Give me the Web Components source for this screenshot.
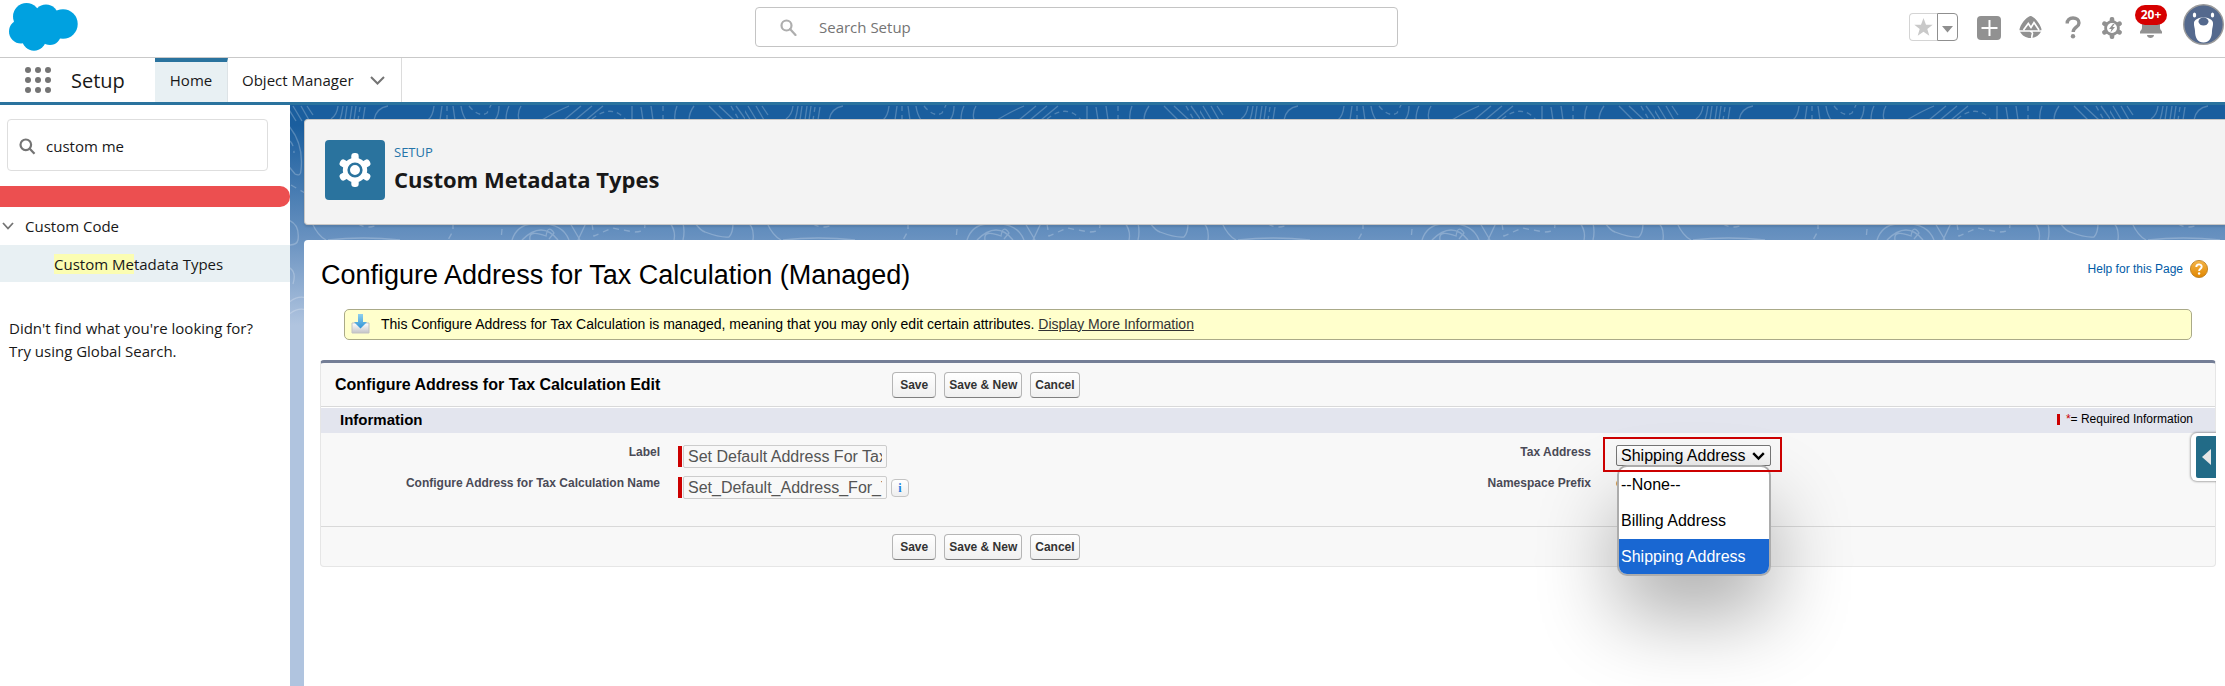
<!DOCTYPE html>
<html lang="en">
<head>
<meta charset="utf-8">
<title>Custom Metadata Types | Setup</title>
<style>
  html, body { margin: 0; }
  body { font-family: "Open Sans", "Noto Sans", sans-serif; font-size: 15px; color: #181818; background: #fff; }
</style>
</head>
<body>
<setup-app></setup-app>
<script>
const define = (name, html) => {
  const template = document.createElement('template');
  template.innerHTML = '<style>*{box-sizing:border-box}:host{display:block;box-sizing:border-box}</style>' + html;
  customElements.define(name, class extends HTMLElement {
    constructor() {
      super();
      this.attachShadow({ mode: 'open' }).append(template.content.cloneNode(true));
    }
  });
};

define('setup-app', `
<style>
  :host { display: flex; flex-direction: column; min-height: 100vh; overflow: hidden; }
  .body { flex: 1; display: grid; grid-template-columns: 290px minmax(0, 1fr); }
  main { position: relative; padding: 14px 0 0 14px; display: flex; flex-direction: column; gap: 15px; background: #b0c4df; }
  topo-background { position: absolute; inset: 0 0 auto 0; }
  page-header, content-card { position: relative; }
  content-card { flex: 1; }
</style>
<app-header></app-header>
<app-nav></app-nav>
<div class="body">
  <setup-sidebar></setup-sidebar>
  <main>
    <topo-background></topo-background>
    <page-header>Custom Metadata Types</page-header>
    <content-card>
      <managed-notice></managed-notice>
      <edit-block>
        <span slot="title">Configure Address for Tax Calculation Edit</span>
        <form-field slot="left" label="Label" value="Set Default Address For Tax Calculation"></form-field>
        <form-field slot="left" label="Configure Address for Tax Calculation Name" value="Set_Default_Address_For_Tax_Calculation" info></form-field>
        <picklist-field slot="right"></picklist-field>
        <text-field slot="right"></text-field>
      </edit-block>
    </content-card>
  </main>
</div>`);

define('app-header', `
<style>
  :host { display: grid; grid-template-columns: 755fr 643fr 827fr; align-items: start; height: 58px; border-bottom: 1px solid #c9c9c9; background: #fff; }
  .logo { display: block; margin: 3px 0 0 9px; }
  .search { display: flex; align-items: center; gap: 22px; height: 40px; margin-top: 7px; padding: 0 24px; border: 1px solid #c4c4c4; border-radius: 4px; }
  .search input { flex: 1; border: 0; outline: 0; padding: 0; background: none; font: 15px "Open Sans", sans-serif; color: #444; }
  .search input::placeholder { color: #747474; opacity: 1; }
  .actions { display: flex; justify-content: flex-end; align-items: flex-start; padding: 4px 1px 0 0; }
  button { display: block; border: 0; padding: 0; background: none; line-height: 0; }
  .fav { display: flex; margin: 9px 19px 0 0; }
  .fav button { height: 28px; width: 28px; border: 1px solid #d4d4d4; border-right: 0; border-radius: 4px 0 0 4px; }
  .fav button + button { width: 21px; border: 1px solid #8f8f8f; border-radius: 0 4px 4px 0; }
  .plus { margin: 12px 18px 0 0; } .trail { margin: 12px 23px 0 0; } .help { margin: 12px 20px 0 0; } .gear { margin: 12px 12px 0 0; }
  .bell { position: relative; width: 32px; height: 38px; margin-right: 16px; }
  .badge { position: absolute; left: 0; top: 1px; width: 32px; height: 20px; border-radius: 10px; background: #d60000; color: #fff; font: bold 12px/20px "Open Sans", sans-serif; text-align: center; }
</style>
<svg class="logo" width="70" height="48" viewBox="0 0 70 48" role="img" aria-label="Salesforce"><g fill="#00a1e0"><circle cx="17.500" cy="13.500" r="13.500"/><circle cx="37" cy="14" r="12.500"/><circle cx="54" cy="21" r="14.700"/><circle cx="12" cy="28.500" r="12"/><circle cx="25" cy="36" r="11.800"/><circle cx="41" cy="31" r="11"/><path d="M14 12h40v20H14z"/></g></svg>
<label class="search"><svg width="17" height="17" viewBox="0 0 17 17" fill="none" stroke="#aeaeae" stroke-width="2.200"><circle cx="6.500" cy="6.500" r="5"/><path d="M10 10l5.500 6" stroke-linecap="round"/></svg><input type="text" placeholder="Search Setup" aria-label="Search Setup"></label>
<div class="actions">
  <div class="fav"><button aria-label="Favorite"><svg width="27" height="26" viewBox="0 0 27 26"><path d="M13.500 4l2.500 6.800h6.700l-5.400 4.200 2 6.700-5.800-4-5.800 4 2-6.700L4.300 10.800H11z" fill="#c9c9c9"/></svg></button><button aria-label="Favorites list"><svg width="19" height="26" viewBox="0 0 19 26"><path d="M4 12h11l-5.500 6.500z" fill="#8f8f8f"/></svg></button></div>
  <button class="plus" aria-label="Add"><svg width="24" height="24" viewBox="0 0 24 24"><rect width="24" height="24" rx="4" fill="#919191"/><path d="M12.500 4v16M4.500 12h16" stroke="#fff" stroke-width="2"/></svg></button>
  <button class="trail" aria-label="Guidance center"><svg width="23" height="22" viewBox="0 0 23 22"><path d="M11.500 0c2 0 8.500 5 10.800 12.500.4 1.600.1 2.500-.3 3.200C20 19.500 16 22 11.500 22S3 19.500 1 15.700c-.4-.7-.7-1.600-.3-3.200C3 5 9.500 0 11.500 0z" fill="#919191"/><path d="M0 15h23M4.500 14l4.800-6.500 2.700 4 3-5 5 7.500M11 15c5 2 1 3 2 7" fill="none" stroke="#fff" stroke-width="1.700"/></svg></button>
  <button class="help" aria-label="Help"><svg width="16" height="23" viewBox="0 0 16 23"><path d="M2.200 7.500C2 4 4.500 2 8 2s6 2 6 5c0 4.500-5.800 4-5.800 9" fill="none" stroke="#919191" stroke-width="3.400"/><circle cx="8" cy="20.300" r="2.200" fill="#919191"/></svg></button>
  <button class="gear" aria-label="Setup"><svg width="22" height="24" viewBox="-11 -12 22 24"><g fill="#919191"><circle r="7.800"/><rect x="-2.300" y="-11" width="4.600" height="22" rx="2"/><rect x="-2.300" y="-11" width="4.600" height="22" rx="2" transform="rotate(60)"/><rect x="-2.300" y="-11" width="4.600" height="22" rx="2" transform="rotate(120)"/></g><circle r="5" fill="#fff"/><path d="M1-4l-4 5h2.500L-1.500 4.500 3-1H.5L2.500-4z" fill="#919191"/></svg></button>
  <button class="bell" aria-label="Notifications"><svg width="32" height="38" viewBox="0 0 32 38"><path d="M7 12h18v12c0 2 2 2.500 2 4v1.500H5V28c0-1.500 2-2 2-4zM12 31h7c0 4-7 4-7 0z" fill="#919191"/></svg><span class="badge">20+</span></button>
  <button aria-label="View profile"><svg width="41" height="41" viewBox="0 0 41 41"><circle cx="20.500" cy="20.500" r="19.800" fill="#54698d" stroke="#9b9b9b" stroke-width="1.400"/><path d="M11 19c0-3.500 5-5.500 9.500-5.500S30 15.500 30 19c.3 3-1 5-1 8 0 7-3 11.500-8.500 11.500S12 34 12 27c0-3-1.300-5-1-8z" fill="#fff"/><ellipse cx="20.500" cy="17.500" rx="5" ry="4" fill="#54698d"/><ellipse cx="11.500" cy="11" rx="1.700" ry="2.600" fill="#fff"/><ellipse cx="29.500" cy="11" rx="1.700" ry="2.600" fill="#fff"/></svg></button>
</div>`);

define('app-nav', `
<style>
  :host { display: flex; height: 47px; border-bottom: 3px solid #2a739e; background: #fff; }
  button { border: 0; padding: 0; background: none; line-height: 0; }
  .waffle { margin: 0 20px 0 25px; }
  .app { width: 84px; font-size: 20px; line-height: 46px; }
  nav { display: flex; }
  a { color: #181818; text-decoration: none; line-height: 44px; }
  .home { width: 73px; text-align: center; line-height: 36px; border-top: 4px solid #2a739e; background: #e8f0f3; border-right: 1px solid #dde3e6; }
  .om { display: flex; align-items: center; gap: 16px; padding: 0 16px 0 14px; border-right: 1px solid #dcdcdc; }
</style>
<button class="waffle" aria-label="App launcher"><svg width="26" height="26" viewBox="0 0 26 26" fill="#747474"><circle cx="3" cy="3" r="3"/><circle cx="13" cy="3" r="3"/><circle cx="23" cy="3" r="3"/><circle cx="3" cy="13" r="3"/><circle cx="13" cy="13" r="3"/><circle cx="23" cy="13" r="3"/><circle cx="3" cy="23" r="3"/><circle cx="13" cy="23" r="3"/><circle cx="23" cy="23" r="3"/></svg></button>
<span class="app">Setup</span>
<nav><a class="home" href="#home">Home</a><div class="om"><a href="#objects">Object Manager</a><button aria-label="Object Manager menu"><svg width="15" height="9" viewBox="0 0 15 9" fill="none" stroke="#747474" stroke-width="2"><path d="M1 1l6.500 6.500L14 1"/></svg></button></div></nav>`);

define('setup-sidebar', `
<style>
  :host { background: #fff; padding-top: 14px; }
  .find { display: flex; align-items: center; gap: 10px; height: 52px; margin: 0 22px 0 7px; padding: 2px 0 0 11px; border: 1px solid #dedede; border-radius: 4px; }
  input { flex: 1; min-width: 0; border: 0; outline: 0; padding: 0; font: 15px "Open Sans", sans-serif; color: #181818; }
  .bar { height: 21px; margin-top: 15px; border-radius: 0 10px 10px 0; background: #ec4f50; }
  .group { display: flex; align-items: center; gap: 11px; height: 38px; padding-left: 2px; }
  a { display: block; height: 37px; padding-left: 54px; line-height: 38px; background: #e8f0f3; color: #181818; text-decoration: none; }
  mark { background: #fbfdb2; color: inherit; }
  p { margin: 35px 9px 0; line-height: 23px; }
</style>
<label class="find"><svg width="17" height="17" viewBox="0 0 17 17" fill="none" stroke="#747474" stroke-width="2.200"><circle cx="6.800" cy="6.800" r="5.300"/><path d="M10.500 10.500l5 5.300"/></svg><input type="text" value="custom me" aria-label="Quick Find"></label>
<div class="bar"></div>
<div class="group"><svg width="12" height="8" viewBox="0 0 12 8" fill="none" stroke="#747474" stroke-width="1.800"><path d="M1 1l5 5.500L11 1"/></svg><span>Custom Code</span></div>
<a href="#cmt"><mark>Custom Me</mark>tadata Types</a>
<p>Didn't find what you're looking for?<br>Try using Global Search.</p>`);

define('topo-background', `
<style>
  :host { height: 220px; background: linear-gradient(#1a5e9e 20px, #6690bf 130px, #b0c4df 220px); }
  svg { display: block; width: 100%; height: 100%; }
</style>
<svg aria-hidden="true"><defs><pattern id="topo" width="455" height="220" patternUnits="userSpaceOnUse"><g fill="none" stroke="#fff" stroke-opacity=".23" stroke-width="1.300">
<path d="M-2 3L6 16M3 1l9 15M11 1l8 14M17 1l6 9M48 1q-1 9-7 13M53 1q-1 8-3 14M57 1l-2 14M62 1l-2 14M66 1l-2 14M75 2l-2 13M98 1Q86 3 84 15M144 1q-1 10-6 14M152 1l-2 14M163 1l2 14M171 1q1 8 5 14M209 1q0 9-4 14M219 1q-3 6-3 14M231 1q-4 6-2 14M279 1q-12 5-27 14M291 1l-17 14M302 1l-17 14M313 1l-17 14M342 1v14M351 2l2 13M361 1l2 14M387 1q-3 7-2 14M404 1q-5 7-5 14M419 1l14 14M429 1l15 14M446 1l10 14"/>
<path stroke-dasharray="5 4" d="M70 2l-2 13M157 1v14M179 1q10 12 18 7l4-8M302 14q20-16 34 1M373 1v14M441 1l8 14"/>
<path d="M-2 20q16 18 13 45 0 7-6 4L-4 58M-2 115q12 4 10 20-1 5-9 5M22 118q6 13 14 17M38 135q35-4 72 0M222 135q5-15 20-16 30-3 37 16M232 135q20-20 36 0M240 135q-2-11 16-4 2-12 8-3l-5 6M280 118l10 17M296 118l-8 17M380 118q6 8 4 17M393 118q2 9 0 17M405 118q6 8 10 9 16 6 24 5 4-4 4-14M460 118q1 9-2 17M-2 162q9 4 5 17M-2 198q10-8 18-5M-2 210q10-8 18-5"/>
<path stroke-dasharray="6 5" d="M0 36q4 4 4 12M1 80l14 8M68 119q10 6 22 0M163 118v8l-5 9M212 124l-1 11M302 119l2 12 18-8 22 4q14 0 10-10"/>
</g></pattern></defs><rect width="100%" height="100%" fill="url(#topo)"/></svg>`);

define('page-header', `
<style>
  :host { display: flex; align-items: flex-start; gap: 9px; height: 106px; padding: 20px; border: 1px solid #c9c7c5; border-right: 0; border-radius: 4px 0 0 4px; background: #f3f3f3; box-shadow: 0 2px 2px rgba(0,0,0,.1); }
  .eyebrow { margin-top: 2px; font-size: 13px; line-height: 20px; color: #2574a9; }
  h1 { margin: 0; font-size: 22px; line-height: 34px; font-weight: 700; }
</style>
<svg width="60" height="60" viewBox="-30 -30 60 60" aria-hidden="true"><rect x="-30" y="-30" width="60" height="60" rx="4" fill="#2a739e"/><g fill="#fff"><circle r="12.200"/><rect x="-3.700" y="-17" width="7.400" height="34" rx="3.200"/><rect x="-3.700" y="-17" width="7.400" height="34" rx="3.200" transform="rotate(60)"/><rect x="-3.700" y="-17" width="7.400" height="34" rx="3.200" transform="rotate(120)"/></g><circle r="6.300" fill="#fff" stroke="#2a739e" stroke-width="2.600"/></svg>
<div><div class="eyebrow">SETUP</div><h1><slot></slot></h1></div>`);

define('content-card', `
<style>
  :host { padding: 18px 9px 0 16px; border-radius: 4px 0 0 0; background: #fff; font-family: "Liberation Sans", Arial, sans-serif; color: #000; }
  header { display: flex; justify-content: space-between; align-items: flex-start; height: 51px; padding-left: 1px; }
  h2 { margin: 0; font-size: 27px; line-height: 34px; font-weight: 400; }
  .help { display: flex; align-items: center; gap: 7px; margin: 0 8px 0 0; font-size: 12px; line-height: 22px; color: #015ba7; text-decoration: none; }
</style>
<header><h2>Configure Address for Tax Calculation (Managed)</h2>
<a class="help" href="#help">Help for this Page <svg width="18" height="18" viewBox="0 0 18 18" aria-hidden="true"><defs><linearGradient id="o" x2="0" y2="1"><stop stop-color="#f5b547"/><stop offset="1" stop-color="#e08600"/></linearGradient></defs><circle cx="9" cy="9" r="8.600" fill="url(#o)" stroke="#b87a1c" stroke-width=".8"/><path d="M6.300 7c0-3.400 5.400-3.400 5.400-.3 0 2-2.600 2-2.600 4.300" fill="none" stroke="#fff" stroke-width="1.900"/><circle cx="9.100" cy="13.500" r="1.200" fill="#fff"/></svg></a></header>
<slot></slot>`);

define('managed-notice', `
<style>
  :host { display: flex; align-items: center; gap: 11px; height: 31px; margin: 0 24px 20px; padding: 0 0 2px 6px; border: 1px solid #aaaa88; border-radius: 5px; background: #ffffcc; font-size: 14px; }
  a { color: #333; }
</style>
<svg width="19" height="20" viewBox="0 0 19 20" aria-hidden="true"><defs><linearGradient id="b" x2="0" y2="1"><stop stop-color="#fff"/><stop offset="1" stop-color="#c4c4c8"/></linearGradient><linearGradient id="a" x2="0" y2="1"><stop stop-color="#8fd0ee"/><stop offset="1" stop-color="#2f93d6"/></linearGradient></defs><path d="M1 9h17v10H1z" fill="url(#b)" stroke="#c3c3c3"/><path d="M7 0h5v8h4l-6.500 6.500L3 8h4z" fill="url(#a)"/></svg>
<span>This Configure Address for Tax Calculation is managed, meaning that you may only edit certain attributes. <a href="#more">Display More Information</a></span>`);

define('button-row', `
<style>
  :host { display: flex; gap: 8px; }
  button { height: 26px; padding: 0 4px; border: 1px solid #b5b5b5; border-bottom-color: #7f7f7f; border-radius: 4px; background: linear-gradient(#fff, #f0f0f0); font: bold 12px "Liberation Sans", Arial, sans-serif; color: #333; }
  .save { padding: 0 7px; }
</style>
<button class="save">Save</button><button>Save &amp; New</button><button>Cancel</button>`);

define('edit-block', `
<style>
  :host { position: relative; border: 1px solid #e6e6e6; border-top: 3px solid #747e96; border-radius: 4px; background: #f8f8f8; }
  .head, .foot { display: grid; grid-template-columns: 30% 1fr; align-items: center; }
  .head { height: 43px; }
  .foot { height: 40px; border-top: 1px solid #d9d9d9; }
  h3, h4 { margin: 0; font-size: 16px; font-weight: 700; }
  h3 { padding-left: 14px; }
  button-row { padding-left: 3px; grid-column: 2; }
  .sub { display: flex; justify-content: space-between; align-items: center; height: 27px; padding: 0 22px 2px 19px; border-top: 1px solid #d9d9d9; box-shadow: inset 0 1px #fff; background: #e3e5ee; }
  h4 { font-size: 15px; }
  .req { display: flex; align-items: center; font-size: 12px; }
  .req i { width: 3px; height: 11px; margin-right: 6px; background: #c00; }
  .req em { color: #c00; font-style: normal; }
  .cols { display: grid; grid-template-columns: 932fr 964fr; padding: 12px 0 19px; }
  .tab { position: absolute; right: -1px; top: 70px; width: 25px; height: 48px; padding: 3px 0 3px 5px; border: 0; border-radius: 6px 0 0 6px; background: #fff; box-shadow: 0 0 2px 1px rgba(0,0,0,.3); clip-path: inset(-4px 0 -4px -4px); }
  .tab span { display: grid; place-items: center; height: 100%; border-radius: 2px 0 0 2px; background: #226b87; }
</style>
<div class="head"><h3><slot name="title"></slot></h3><button-row></button-row></div>
<div class="sub"><h4>Information</h4><span class="req"><i></i><em>*</em>= Required Information</span></div>
<div class="cols"><div><slot name="left"></slot></div><div><slot name="right"></slot></div></div>
<div class="foot"><button-row></button-row></div>
<button class="tab" aria-label="Open side panel"><span><svg width="9" height="16" viewBox="0 0 9 16"><path d="M9 0v16L0 8z" fill="#e6e6e6"/></svg></span></button>`);

const fieldCss = `
  :host { display: grid; grid-template-columns: minmax(0, 339px) 1fr; height: 31px; font-size: 12px; }
  .label { font-weight: 700; line-height: 15px; color: #4a4a56; text-align: right; }`;

customElements.define('form-field', class extends HTMLElement {
  connectedCallback() {
    const root = this.shadowRoot || this.attachShadow({ mode: 'open' });
    root.innerHTML = `<style>*{box-sizing:border-box}${fieldCss}
      .data { display: flex; align-items: flex-start; padding-left: 18px; }
      input { width: 204px; height: 23px; padding: 0 4px; border: 1px solid #ccc; border-radius: 2px; background: #f8f8f8; font: 16px "Liberation Sans", Arial, sans-serif; color: #545454; }
      .bar { width: 4px; height: 21px; margin: 1px 1px 0 0; background: #c00; }
      button { width: 18px; height: 18px; margin: 3px 0 0 4px; padding: 0; border: 1px solid #c4c4c4; border-radius: 4px; background: linear-gradient(#fff, #eee); font: bold 12px/14px "Liberation Serif", serif; color: #1b7fe0; }
      </style><label class="label" for="f"></label><div class="data"><span class="bar"></span><input id="f" type="text" readonly></div>`;
    root.querySelector('label').textContent = this.getAttribute('label');
    root.querySelector('input').value = this.getAttribute('value');
    if (this.hasAttribute('info')) {
      const info = document.createElement('button');
      info.textContent = 'i';
      info.setAttribute('aria-label', 'Field information');
      root.querySelector('.data').append(info);
    }
  }
});

define('text-field', `<style>${fieldCss}
  .data { padding-left: 25px; line-height: 15px; color: #333; }</style>
  <span class="label">Namespace Prefix</span><span class="data">c</span>`);

define('picklist-field', `<style>${fieldCss}
  .data { padding-left: 25px; }
  .wrap { position: relative; z-index: 2; width: 155px; height: 21px; }
  .wrap::before { content: ""; position: absolute; inset: -8px -11px -6px -13px; border: 2px solid #c00; z-index: 2; pointer-events: none; }
  select { appearance: none; display: block; width: 100%; height: 21px; padding: 0 4px; border: 1px solid #767676; border-radius: 2px; background: linear-gradient(#fff, #efefef); font: 16px "Liberation Sans", Arial, sans-serif; color: #000; }
  .wrap > svg { position: absolute; right: 6px; top: 7px; }
  ul { position: absolute; left: 1px; right: 0; top: 20px; margin: 0; padding: 0; list-style: none; overflow: hidden; border: 2px solid #acacac; border-radius: 10px; background: #fff; font-size: 16px; line-height: 36px; color: #000; box-shadow: 0 40px 80px rgba(0,0,0,.32); }
  li { height: 36px; padding-left: 2px; }
  li[aria-selected=true] { height: 35px; background: #1967d2; color: #fff; }
</style>
<label class="label" for="tax">Tax Address</label>
<div class="data"><div class="wrap"><select id="tax"><option>--None--</option><option>Billing Address</option><option selected>Shipping Address</option></select><svg width="13" height="9" viewBox="0 0 13 9" fill="none" stroke="#000" stroke-width="2.400"><path d="M1.200 1.200l5.300 5.300 5.300-5.300"/></svg>
<ul role="listbox" aria-label="Tax Address options"><li role="option">--None--</li><li role="option">Billing Address</li><li role="option" aria-selected="true">Shipping Address</li></ul></div></div>`);
</script>
</body>
</html>
